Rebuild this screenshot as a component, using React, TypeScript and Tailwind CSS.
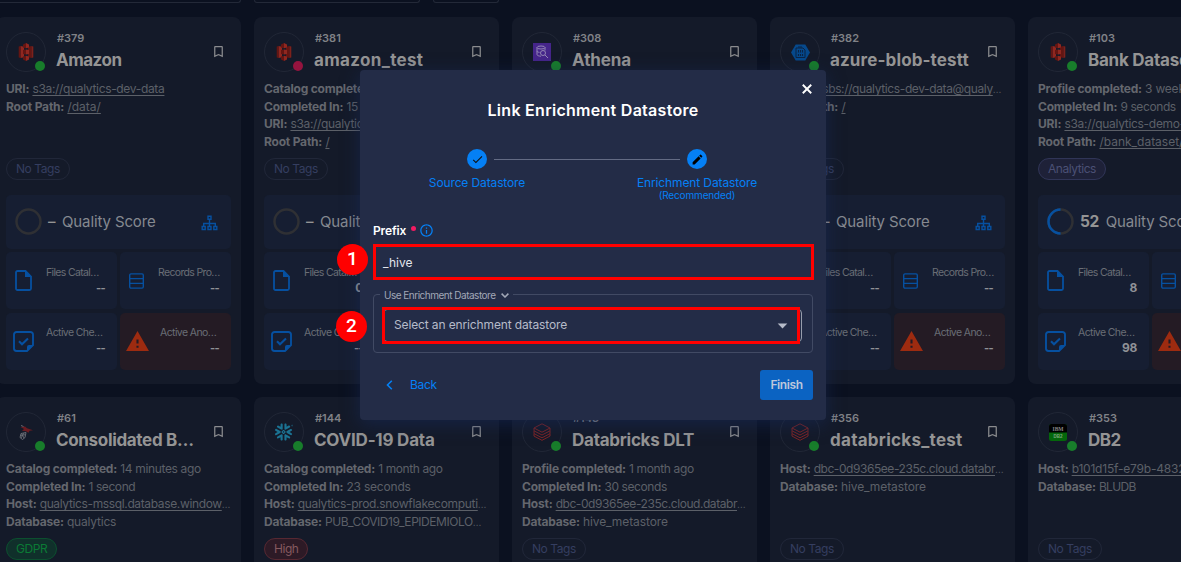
import React from "react";
import { MdBookmarkBorder, MdCheck, MdEdit, MdOutlineInfo, MdArrowDropDown, MdWarning } from "react-icons/md";
import { SiSnowflake } from "react-icons/si";

type Info = { label: string; value: string; link?: boolean; more?: boolean; track?: string };
type Store = {
  id: string;
  name: string;
  nameTrack?: string;
  logo: "s3" | "athena" | "azure" | "mssql" | "snowflake" | "databricks" | "db2";
  failed?: boolean;
  info: Info[];
  tag: string;
  tagClass?: string;
  score?: string;
  files?: string;
  checks?: string;
};

const stores: Store[] = [
  { id: "379", name: "Amazon", nameTrack: "tracking-[-0.5px]", logo: "s3", tag: "No Tags", info: [
    { label: "URI:", value: "s3a://qualytics-dev-data", link: true, track: "tracking-[-0.33px]" },
    { label: "Root Path:", value: "/data/", link: true, track: "tracking-[0px]" } ] },
  { id: "381", name: "amazon_test", nameTrack: "tracking-[0.34px]", logo: "s3", failed: true, tag: "No Tags", files: "0", info: [
    { label: "Catalog completed:", value: "1 month ago" },
    { label: "Completed In:", value: "15 seconds" },
    { label: "URI:", value: "s3a://qualytics-dev-data", link: true, track: "tracking-[-0.33px]" },
    { label: "Root Path:", value: "/", link: true } ] },
  { id: "308", name: "Athena", nameTrack: "tracking-[-0.1px]", logo: "athena", tag: "No Tags", info: [] },
  { id: "382", name: "azure-blob-testt", nameTrack: "tracking-[0.13px]", logo: "azure", tag: "No Tags", info: [
    { label: "URI:", value: "wasbs://qualytics-dev-data@qualy", link: true, more: true, track: "tracking-[-0.38px]" },
    { label: "Root Path:", value: "/", link: true } ] },
  { id: "103", name: "Bank Dataset", nameTrack: "tracking-[-0.25px]", logo: "s3", tag: "Analytics", tagClass: "border-[#303557] bg-[#1e2138] text-[#4b5075]", score: "52", files: "8", checks: "98", info: [
    { label: "Profile completed:", value: "3 weeks ago" },
    { label: "Completed In:", value: "9 seconds", track: "tracking-[-0.4px]" },
    { label: "URI:", value: "s3a://qualytics-demo-data", link: true, track: "tracking-[-0.3px]" },
    { label: "Root Path:", value: "/bank_dataset/", link: true, track: "tracking-[0px]" } ] },
  { id: "61", name: "Consolidated B…", nameTrack: "tracking-[-0.33px]", logo: "mssql", tag: "GDPR", tagClass: "border-[#0c4f2f] bg-[#10302b] text-[#0b7a35]", info: [
    { label: "Catalog completed:", value: "14 minutes ago", track: "tracking-[-0.34px]" },
    { label: "Completed In:", value: "1 second", track: "tracking-[-0.4px]" },
    { label: "Host:", value: "qualytics-mssql.database.window", link: true, more: true, track: "tracking-[-0.36px]" },
    { label: "Database:", value: "qualytics" } ] },
  { id: "144", name: "COVID-19 Data", nameTrack: "tracking-[-0.22px]", logo: "snowflake", tag: "High", tagClass: "border-[#572832] bg-[#2d1a26] text-[#85595f]", info: [
    { label: "Catalog completed:", value: "1 month ago", track: "tracking-[-0.4px]" },
    { label: "Completed In:", value: "23 seconds" },
    { label: "Host:", value: "qualytics-prod.snowflakecomputi", link: true, more: true, track: "tracking-[-0.31px]" },
    { label: "Database:", value: "PUB_COVID19_EPIDEMIOLO", more: true, track: "tracking-[-0.45px]" } ] },
  { id: "143", name: "Databricks DLT", nameTrack: "tracking-[-0.26px]", logo: "databricks", tag: "No Tags", info: [
    { label: "Profile completed:", value: "1 month ago", track: "tracking-[-0.36px]" },
    { label: "Completed In:", value: "30 seconds", track: "tracking-[-0.4px]" },
    { label: "Host:", value: "dbc-0d9365ee-235c.cloud.databr", link: true, more: true, track: "tracking-[-0.44px]" },
    { label: "Database:", value: "hive_metastore", track: "tracking-[-0.1px]" } ] },
  { id: "356", name: "databricks_test", nameTrack: "tracking-[0.27px]", logo: "databricks", tag: "No Tags", info: [
    { label: "Host:", value: "dbc-0d9365ee-235c.cloud.databr", link: true, more: true, track: "tracking-[-0.44px]" },
    { label: "Database:", value: "hive_metastore", track: "tracking-[-0.1px]" } ] },
  { id: "353", name: "DB2", nameTrack: "tracking-[-0.5px]", logo: "db2", tag: "No Tags", info: [
    { label: "Host:", value: "b101d15f-e79b-4832-b1", link: true },
    { label: "Database:", value: "BLUDB", track: "tracking-[-0.7px]" } ] },
];

function Logo({ kind }: { kind: Store["logo"] }) {
  switch (kind) {
    case "s3":
      return (
        <svg width="16" height="18" viewBox="0 0 16 18">
          <path d="M.7 3.500 2.700 3v12l-2-.5z" fill="#641512" />
          <path d="M2.700 3 6 3.800v10.400L2.700 15z" fill="#8f2720" />
          <path d="M15.300 3.500 13.300 3v12l2-.5z" fill="#7d211b" />
          <path d="M13.300 3 10 3.800v10.400l3.300.8z" fill="#641512" />
          <path d="M5 1.500 8 0v5.200l-3-.6zM5 7l3-.4v4.800L5 11zM5 13.400l3-.6V18l-3-1.500z" fill="#641512" />
          <path d="M8 0l3 1.500v3.100l-3 .6zM8 6.600l3 .4v4l-3 .4zM8 12.800l3 .6v3.100L8 18z" fill="#8f2720" />
        </svg>
      );
    case "athena":
      return (
        <svg width="18" height="18" viewBox="0 0 18 18">
          <rect width="18" height="18" fill="#45258a" />
          <g fill="none" stroke="#9487b5" strokeWidth="1">
            <ellipse cx="8" cy="4.500" rx="4" ry="1.500" />
            <path d="M4 4.500v7c0 1 2 1.700 4 1.700M12 4.500v3M4 8c0 .8 1 1.200 2.500 1.400" />
            <circle cx="10" cy="10" r="2.500" />
            <path d="m12 12 3 3" />
          </g>
        </svg>
      );
    case "azure":
      return (
        <svg width="19" height="17" viewBox="0 0 19 17">
          <path d="M4.700.5h9.600L19 8.500l-4.700 8H4.700L0 8.500z" fill="#06498c" />
          <path d="M5 4h7l2 2v7.500H5zM7 3h4" fill="none" stroke="#0b2445" />
          <path d="M7.500 6v2.500M9.500 6v2.500M11.500 6v2.500M7.500 10v2M9.500 10v2M11.500 10v2" stroke="#0b2445" strokeWidth="1.100" />
        </svg>
      );
    case "mssql":
      return (
        <svg width="16" height="17" viewBox="0 0 16 17">
          <path d="M2.500 3 7 2.500 9 4.200l6 2-3.500.5-1 2-2.500-1.500-4-.5 2-1.700z" fill="#6b1c22" />
          <path d="M3 1.500 5.500 2.500M3 9.500l5-1-1 5-2.500 2-2.500-2zM3.500 9.500 6 14M6 9l-3 5M2.500 11.500l5-.8" fill="none" stroke="#6d7078" strokeWidth=".9" />
        </svg>
      );
    case "snowflake":
      return <SiSnowflake className="size-[18px] text-[#1b7393]" />;
    case "databricks":
      return (
        <svg width="18" height="18" viewBox="0 0 18 18" fill="none" stroke="#7d2426" strokeWidth="1">
          <path d="M1 5 9 .8 17 5 9 9.200zM1 5v2.800L9 12l8-4.200V5M1 7.800v2.800l8 4.200 8-4.200V7.800M1 10.600v2.500l8 4.200 8-4.200v-2.500" />
        </svg>
      );
    default:
      return (
        <svg width="18" height="17" viewBox="0 0 18 17">
          <rect width="18" height="17" rx="2.500" fill="#04670b" />
          <path d="M0 8.500v-6A2.500 2.500 0 0 1 2.500 0h13A2.500 2.500 0 0 1 18 2.500v6z" fill="#000" />
          <text x="9" y="7" textAnchor="middle" fontSize="5.500" fontWeight="700" fill="#858585" fontFamily="Liberation Serif">IBM</text>
          <text x="9" y="14" textAnchor="middle" fontSize="4.500" fontWeight="700" fill="#7da57d" fontFamily="Liberation Sans">DB2</text>
        </svg>
      );
  }
}

function SitemapIcon() {
  return (
    <svg width="17" height="16" viewBox="0 0 17 16" fill="none" stroke="#0650a0" strokeWidth="1.400">
      <path d="M7 1.200h3v3H7zM1.200 11.500h3v3h-3zM7 11.500h3v3H7zM12.800 11.500h3v3h-3zM8.500 4.200v7M2.700 11.300V8.500h11.600v2.800" />
    </svg>
  );
}

function FileIcon() {
  return (
    <svg width="17" height="21" viewBox="0 0 17 21">
      <path d="M2.500 1H10.500L16 6.500V18.500a1.500 1.500 0 0 1-1.500 1.500h-12A1.500 1.500 0 0 1 1 18.500v-16A1.500 1.500 0 0 1 2.500 1z" fill="none" stroke="#0650a0" strokeWidth="1.800" />
      <path d="M10 .5V7h6.500z" fill="#0650a0" />
    </svg>
  );
}

function RecordsIcon() {
  return (
    <svg width="15" height="16" viewBox="0 0 15 16" fill="none" stroke="#0650a0" strokeWidth="1.400">
      <rect x=".7" y=".9" width="13.600" height="14.200" rx="1.300" />
      <path d="M.7 5.600h13.600M.7 10.400h13.600" />
    </svg>
  );
}

function CheckNoteIcon() {
  return (
    <svg width="21" height="21" viewBox="0 0 21 21" fill="none" stroke="#0650a0">
      <path d="M3.500 1h14A2.500 2.500 0 0 1 20 3.500V14l-6 6H3.500A2.500 2.500 0 0 1 1 17.500v-14A2.500 2.500 0 0 1 3.500 1z" strokeWidth="1.900" />
      <path d="M14 20v-4a2 2 0 0 1 2-2h4z" fill="#0650a0" stroke="none" />
      <path d="m6 10.200 3 3L15 7.500" strokeWidth="2.100" />
    </svg>
  );
}

function Stat({ icon, label, value, variant = "left", lower }: { icon: React.ReactNode; label: string; value: string; variant?: "left" | "records" | "danger"; lower?: boolean }) {
  return (
    <div className={`flex h-[57px] items-center rounded-[5px] pr-3 ${variant === "danger" ? "bg-[#241b24]" : "bg-[#161e32]"}`}>
      <div className={`flex shrink-0 justify-center ${variant === "records" ? "w-[33px] pt-0.5" : "w-[35px]"}`}>{icon}</div>
      <div className={`flex min-w-0 flex-1 flex-col ${lower ? "pb-0.5" : ""}`}>
        <span className={`whitespace-nowrap pl-[5px] text-[10.5px] leading-[15px] text-[#6a6e76] ${lower ? "tracking-[-0.6px]" : "tracking-[-0.65px]"}`}>{label}</span>
        <span className={`text-right font-bold leading-4 text-[#8f9196] ${value === "--" ? "text-[11px] tracking-[-0.6px]" : "text-[12px] tracking-[-0.3px]"}`}>{value}</span>
      </div>
    </div>
  );
}

function Card({ s }: { s: Store }) {
  return (
    <article className="flex h-[367px] flex-col rounded-lg bg-[#141a29] px-2.5 pt-[15px]">
      <header className="flex h-10 shrink-0">
        <div className="relative flex size-10 shrink-0 items-center justify-center rounded-full border border-[#212736]">
          <Logo kind={s.logo} />
          <span className={`absolute bottom-0 right-0 size-2.5 rounded-full ${s.failed ? "bg-[#95143f]" : "bg-[#187d2b]"}`} />
        </div>
        <div className="ml-2.5 min-w-0 flex-1 whitespace-nowrap">
          <div className="pl-px text-[11px] font-semibold leading-[13px] text-[#808287]">#{s.id}</div>
          <h2 className={`mt-[3px] text-[17px] font-bold leading-6 text-[#949494] ${s.nameTrack ?? "tracking-[-0.2px]"}`}>{s.name}</h2>
        </div>
        <MdBookmarkBorder className="mr-[5px] mt-3 size-[15px] shrink-0 text-[#8a8b8e]" />
      </header>
      <div className="mt-2 h-[71px] shrink-0 whitespace-nowrap text-[12px] leading-[17.67px] tracking-[-0.2px] text-[#5c6068]">
        {s.info.map((i) => (
          <div key={i.label} className="h-[17.67px]">
            <b className="font-bold text-[#64676e]">{i.label}</b>{" "}
            <span className={i.track ?? ""}>
              <span className={i.link ? "underline underline-offset-2" : ""}>{i.value}</span>
              {i.more && <span className="text-[10px] leading-none">…</span>}
            </span>
          </div>
        ))}
      </div>
      <div className={`mt-[7.300px] flex h-[22px] shrink-0 self-start items-center rounded-full border px-[9px] text-[12px] tracking-[-0.45px] ${s.tagClass ?? "border-[#212739] text-[#353e60]"}`}>{s.tag}</div>
      <div className="mt-[14.700px] flex h-[54px] shrink-0 items-center rounded-[5px] bg-[#161e32] pl-[9px] pr-[13px]">
        <svg width="27" height="27" viewBox="0 0 27 27" fill="none" strokeWidth="2.500">
          <circle cx="13.500" cy="13.500" r="12" stroke="#2f3034" />
          {s.score && <path d="M13.500 25.500a12 12 0 1 1 0-24" stroke="#0650a0" />}
        </svg>
        <b className={`ml-1.5 tracking-[-0.5px] text-[#949494] ${s.score ? "text-[15.500px] font-bold" : "text-[15px] font-medium"}`}>{s.score ?? "–"}</b>
        <span className="ml-[7px] flex-1 whitespace-nowrap text-[15px] tracking-[-0.12px] text-[#858990]">Quality Score</span>
        <div className="pt-[3px]"><SitemapIcon /></div>
      </div>
      <div className="mt-[3px] grid grid-cols-2 gap-x-[3px] gap-y-1">
        <Stat icon={<FileIcon />} label="Files Catal…" value={s.files ?? "--"} />
        <Stat icon={<RecordsIcon />} label="Records Pro…" value="--" variant="records" />
        <Stat icon={<CheckNoteIcon />} label="Active Che…" value={s.checks ?? "--"} lower />
        <Stat icon={<MdWarning className="size-[25px] text-[#9d2b10]" />} label="Active Ano…" value="--" variant="danger" lower />
      </div>
    </article>
  );
}

function Dialog() {
  return (
    <section className="absolute left-[360px] top-[70px] h-[350px] w-[466px] rounded bg-[#232c47] px-[13px] shadow-[0_4px_18px_rgba(24,44,92,0.55)]">
      <svg className="absolute right-[14px] top-[14px]" width="10" height="10" viewBox="0 0 9 9" fill="none" stroke="#fff" strokeWidth="1.700">
        <path d="m.7.7 7.600 7.600M8.300.7.7 8.300" />
      </svg>
      <h1 className="pt-7 text-center text-[16px] font-semibold leading-6 tracking-[0.28px] text-white">Link Enrichment Datastore</h1>
      <div className="-ml-3 mt-[27px] flex justify-center text-[12px] leading-[14px] tracking-[-0.12px] text-[#0580f5]">
        <div className="flex w-[134px] flex-col items-center">
          <span className="flex size-5 items-center justify-center rounded-full bg-[#0580f5] text-[#111]"><MdCheck className="size-[13px]" /></span>
          <span className="mt-[7px]">Source Datastore</span>
        </div>
        <div className="-mx-[50px] mt-[10px] h-px w-[186px] bg-[#636b84]" />
        <div className="flex w-[134px] flex-col items-center">
          <span className="flex size-5 items-center justify-center rounded-full bg-[#0580f5] text-black"><MdEdit className="size-[13px]" /></span>
          <span className="mt-[7px] whitespace-nowrap">Enrichment Datastore</span>
          <span className="text-[10px] leading-[11px] tracking-[-0.15px]">(Recommended)</span>
        </div>
      </div>
      <div className="mt-[22px] flex h-4 items-center text-[12px] font-semibold tracking-[-0.15px] text-white">
        Prefix
        <span className="mb-[5px] ml-[5px] size-[5px] rounded-full bg-[#f21b62]" />
        <MdOutlineInfo className="-mt-px ml-[3px] size-[15px] text-[#0580f5]" />
      </div>
      <div className="mt-[5px] flex h-9 w-[441px] items-center border-[3px] border-[#ff0000] pl-[7px] pt-[2px] text-[12px] text-[#e3e6ed]">_hive</div>
      <fieldset className="mt-1.5 h-[67px] rounded border border-[#414a64] pl-[9px] pr-[10px]">
        <legend className="-ml-[3px] flex h-4 items-center px-1 pt-[3px] text-[10px] tracking-[-0.5px] text-[#a2a8b7]">
          Use Enrichment Datastore
          <svg className="ml-1.5" width="8" height="5" viewBox="0 0 8 5" fill="none" stroke="currentColor" strokeWidth="1.500"><path d="m.6.6 3.400 3.400L7.400.6" /></svg>
        </legend>
        <div className="relative mt-[7px] flex h-[33px] items-center justify-between rounded border border-[#969dac] pb-px pl-[10px] pr-[12px] text-[12px] tracking-[-0.13px] text-[#b6bbc9]">
          <span>Select an enrichment datastore</span>
          <MdArrowDropDown className="-mr-[5px] size-[23px]" />
          <span className="absolute -bottom-[3px] -left-[2px] -top-[3px] right-px border-[3px] border-[#ff0000]" />
        </div>
      </fieldset>
      <footer className="mt-[17px] flex h-[30px] items-center text-[12px] tracking-[-0.3px] text-[#0580f5]">
        <svg className="ml-[13px]" width="7" height="10" viewBox="0 0 7 10" fill="none" stroke="currentColor" strokeWidth="1.600"><path d="M5.800.7 1.500 5l4.300 4.300" /></svg>
        <span className="ml-[17px] flex-1">Back</span>
        <button className="h-[30px] w-[53px] rounded-[3px] bg-[#0b63c2] font-semibold tracking-[-0.4px] text-[#bdc8dc]">Finish</button>
      </footer>
    </section>
  );
}

export default function App() {
  return (
    <main className="relative h-[562px] w-[1181px] overflow-hidden bg-[#0b1120] font-['Inter',sans-serif]">
      <div className="-ml-1 flex h-[3px] gap-[13px]">
        <div className="w-[245px] rounded-b border border-t-0 border-[#232938]" />
        <div className="w-[166px] rounded-b border border-t-0 border-[#232938]" />
        <div className="w-[66px] rounded-b border border-t-0 border-[#232938]" />
      </div>
      <div className="-ml-1 mt-[14px] grid w-[1277px] grid-cols-5 gap-[13px]">
        {stores.map((s) => <Card key={s.id} s={s} />)}
      </div>
      <Dialog />
      <span className="absolute left-[337px] top-[244px] flex size-[31px] items-center justify-center rounded-full bg-[#ff0000] font-['Roboto',sans-serif] text-[19px] font-medium text-white">1</span>
      <span className="absolute left-[336px] top-[311px] flex size-[31px] items-center justify-center rounded-full bg-[#ff0000] font-['Roboto',sans-serif] text-[19px] font-medium text-white">2</span>
    </main>
  );
}
